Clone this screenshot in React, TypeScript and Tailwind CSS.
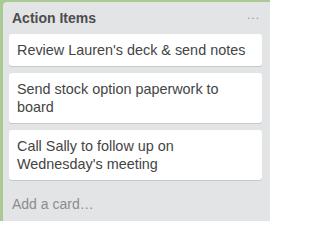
import * as React from "react"

const cards = [
  "Review Lauren's deck & send notes",
  "Send stock option paperwork to board",
  "Call Sally to follow up on Wednesday's meeting",
]

export default function App() {
  return (
    <div
      className="flex h-[221px] w-[270px] flex-col overflow-hidden bg-[#a9cb93] pl-[3px] pt-[2px]"
      style={{ fontFamily: '"Liberation Sans", Arial, sans-serif' }}
    >
      <div className="flex flex-1 flex-col rounded-tl-[4px] bg-[#e2e4e6] pl-[6px] pr-[8px]">
        <div className="flex h-[32px] items-center justify-between pl-[3px] pr-[2px]">
          <h2 className="text-[14px] font-bold leading-none text-[#4d4d4d]">
            Action Items
          </h2>
          <span className="pb-[6px] text-[12px] leading-none tracking-[1px] text-[#999]">
            ...
          </span>
        </div>

        <div className="flex flex-col gap-[7px]">
          {cards.map((c) => (
            <div
              key={c}
              className="rounded-[3px] bg-white px-[8px] py-[7px] text-[14.4px] leading-[18px] text-[#444] shadow-[0_1px_0_#c4c9cc]"
            >
              {c}
            </div>
          ))}
        </div>

        <div className="flex h-[48px] items-center pl-[3px] text-[14px] text-[#8c8c8c]">
          Add a card…
        </div>
      </div>
    </div>
  )
}
